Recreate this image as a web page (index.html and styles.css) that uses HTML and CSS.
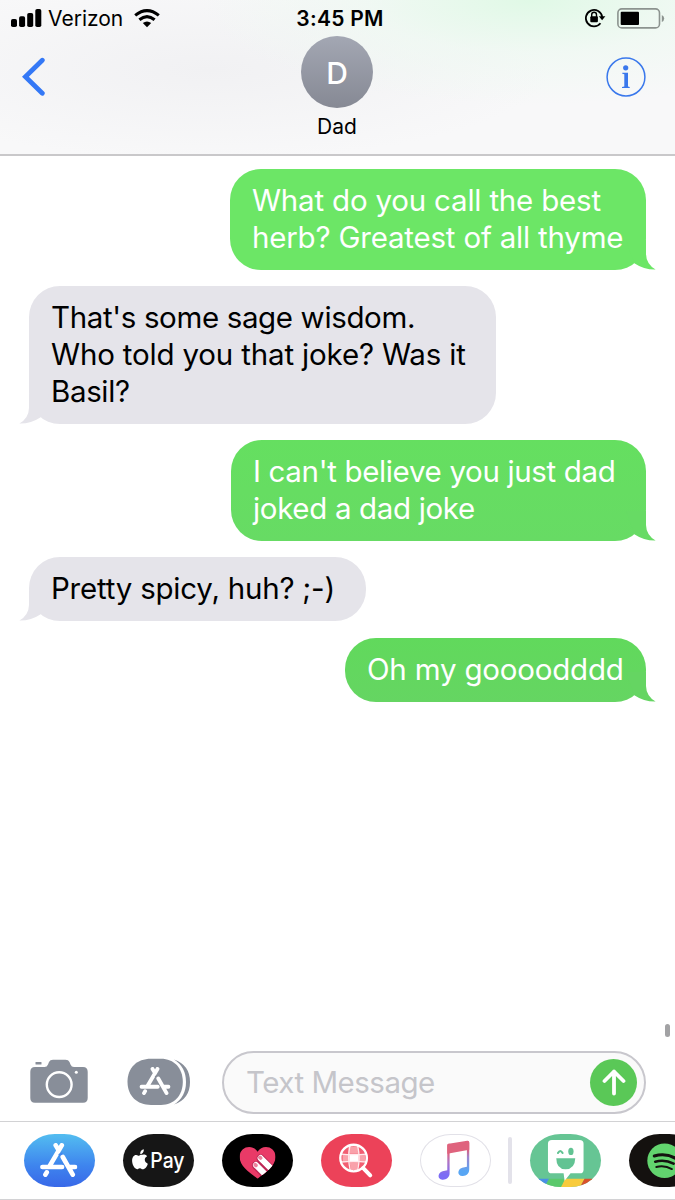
FILE: index.html
```html
<!DOCTYPE html>
<html lang="en">

<head>
    <meta charset="UTF-8">
    <meta name="viewport" content="width=device-width, initial-scale=1.0">
    <title>Messages</title>
    <link rel="stylesheet" href="styles.css">
</head>

<body>
    <!-- shared shapes -->
    <svg width="0" height="0" class="defs">
        <defs>
            <symbol id="tail" viewBox="0 0 30 30">
                <path d="M8.3 23.3Q18 29.8 29.6 29.6Q20.2 24 20 14V0H0Z" />
            </symbol>
            <symbol id="appstore" viewBox="0 0 112 102">
                <g fill="none" stroke="currentColor" stroke-width="14" stroke-linecap="round">
                    <path d="M7 72H66M20 88L16 95M47 7L56 22M65 7L28 70" />
                    <path class="cut" d="M60 31L94 92" stroke-width="12" stroke-linecap="butt" />
                    <path d="M68 42L98 95M88 72H105" />
                </g>
            </symbol>
        </defs>
    </svg>

    <div class="phone">
        <div class="header">
            <div class="status">
                <div class="carrier">
                    <svg class="signal" width="31" height="19" viewBox="0 0 31 19">
                        <rect x="0" y="10" width="6" height="8" rx="1.8" />
                        <rect x="8.1" y="7.3" width="6" height="10.7" rx="1.8" />
                        <rect x="16.2" y="4" width="6" height="14" rx="1.8" />
                        <rect x="24.3" y="0" width="6" height="18" rx="1.8" />
                    </svg>
                    <span class="network">Verizon</span>
                    <svg class="wifi" width="26" height="19" viewBox="0 0 26 19">
                        <g fill="none" stroke="#000" stroke-width="3.1">
                            <path d="M1.2 6.4Q13 -3.2 24.8 6.4" />
                            <path d="M5.4 10.8Q13 4.6 20.6 10.8" />
                        </g>
                        <path d="M8.8 14.1Q13 10.8 17.2 14.1L13 18.2Z" />
                    </svg>
                </div>
                <div class="time">3:45 PM</div>
                <div class="power">
                    <svg width="21" height="20" viewBox="0 0 21 20">
                        <path d="M15.5 15.3A8.2 8.2 0 1 1 17.2 9" fill="none" stroke="#000" stroke-width="1.8" />
                        <path d="M13.8 8.2H20.4L17.1 12.3Z" />
                        <rect x="5.3" y="8.2" width="7.6" height="6" rx="1" />
                        <path d="M6.7 9V6.7a2.4 2.4 0 0 1 4.8 0V9" fill="none" stroke="#000" stroke-width="1.4" />
                    </svg>
                    <svg width="49" height="21" viewBox="0 0 49 21">
                        <rect x="0.9" y="0.9" width="41.6" height="19" rx="4" fill="none" stroke="#8c938f" stroke-width="1.6" />
                        <rect x="3.7" y="3.7" width="18.3" height="13.4" rx="1" />
                        <path d="M44.8 7V14Q47.2 12.8 47.2 10.5T44.8 7Z" fill="#8c938f" />
                    </svg>
                </div>
            </div>
            <div class="nav">
                <svg class="back" width="24" height="40" viewBox="0 0 24 40">
                    <path d="M20.3 3.3L3.4 19.8L20.3 36.3" />
                </svg>
                <div class="contact">
                    <div class="avatar">D</div>
                    <div class="name">Dad</div>
                </div>
                <div class="info">
                    <svg width="40" height="40" viewBox="0 0 40 40">
                        <circle cx="20" cy="20" r="18.9" fill="none" stroke="#3a78ec" stroke-width="1.5" />
                        <circle cx="19.7" cy="10.8" r="2.6" />
                        <path d="M16.3 15.8H22V29.4L23.7 30V31H16V30L18.3 29.4V17.2L16.3 16.8Z" />
                    </svg>
                </div>
            </div>
        </div>

        <div class="messages">
            <div class="msg me first">
                What do you call the best<br>herb? Greatest of all thyme
                <svg class="tail"><use href="#tail" /></svg>
            </div>
            <div class="msg dad">
                <span class="tight">That's some sage wisdom.</span><br>Who told you that joke? Was it<br><span class="tight">Basil?</span>
                <svg class="tail"><use href="#tail" /></svg>
            </div>
            <div class="msg me second">
                I can't believe you just dad<br>joked a dad joke
                <svg class="tail"><use href="#tail" /></svg>
            </div>
            <div class="msg dad short">
                Pretty spicy, huh? ;-)
                <svg class="tail"><use href="#tail" /></svg>
            </div>
            <div class="msg me third">
                Oh my goooodddd
                <svg class="tail"><use href="#tail" /></svg>
            </div>
            <div class="scrollbar"></div>
        </div>

        <div class="compose">
            <svg class="camera" width="58" height="46" viewBox="0 0 58 46">
                <rect x="5.5" y="3" width="6" height="2.6" rx=".6" />
                <path d="M5 8H14.5Q17 8 18 5.5L19 3Q20 .7 23 .7H35.5Q38.5 .7 39.5 3L40.5 5.5Q41.5 8 44 8H53Q57.7 8 57.7 12.7V39Q57.7 43.7 53 43.7H5Q.3 43.7 .3 39V12.7Q.3 8 5 8Z" />
                <circle cx="29.2" cy="25.6" r="12.4" fill="none" stroke="#fff" stroke-width="2.4" />
                <circle cx="46.3" cy="13.3" r="1.5" fill="#fff" />
            </svg>
            <div class="drawer">
                <svg class="drawer-bg" width="64" height="48" viewBox="0 0 64 48">
                    <path d="M47 1.5Q63 7 63 24T47 46.5Q59 39 59 24T47 1.5Z" />
                    <path d="M24 .7H34C47 .7 55.8 10 55.8 23.8S47 47 34 47H24C10 47 .5 38 .5 23.8S10 .7 24 .7Z" />
                </svg>
                <svg class="drawer-a"><use href="#appstore" /></svg>
            </div>
            <div class="field">
                <span>Text Message</span>
                <div class="send">
                    <svg width="24" height="27" viewBox="0 0 24 27">
                        <path d="M12 24.5V2.5M2.5 12L12 2.5L21.5 12" />
                    </svg>
                </div>
            </div>
        </div>

        <div class="apps">
            <div class="app store">
                <svg class="store-a"><use href="#appstore" /></svg>
            </div>
            <div class="app pay">
                <svg viewBox="0 0 214 160">
                    <path fill="#fff" d="M62 66C56 57 46 60 42 63H39C28 57 18 66 19 82C20 97 30 108 37 107C42 104 46 103 51 107C60 109 69 97 70 89C57 83 58 70 68 65C66 62 64 61 62 60C54 57 47 62 44 63M46 58C44 49 51 43 57 42C58 51 52 58 46 58Z" transform="translate(10 7)scale(.92)" />
                    <text x="82" y="101" textLength="103" lengthAdjust="spacingAndGlyphs">Pay</text>
                </svg>
            </div>
            <div class="app touch">
                <svg viewBox="0 0 214 160">
                    <clipPath id="heart">
                        <path d="M107 53C94 30 53 35 53 69C53 96 83 116 107 134C131 116 161 96 161 69C161 35 120 30 107 53Z" />
                    </clipPath>
                    <g clip-path="url(#heart)">
                        <rect width="214" height="160" fill="#e93a67" />
                        <g fill="none" stroke-linecap="round">
                            <path d="M116 73L170 128M102 94L156 149" stroke="#be2856" stroke-width="25" />
                            <path d="M116 72L170 126M102 93L156 147" stroke="#fff" stroke-width="18" />
                            <path d="M114 70L116 72M100 92L102 94" stroke="#ec829d" stroke-width="11" />
                        </g>
                    </g>
                </svg>
            </div>
            <div class="app images">
                <svg viewBox="0 0 214 160">
                    <circle cx="98" cy="72" r="38" fill="#f25e72" />
                    <path fill="#f9a1aa" d="M83 37H112L114 59H83ZM65 61H84L86 82H65ZM113 61H133V82H114ZM85 84H113L108 108H91Z" />
                    <rect x="85" y="62" width="28" height="20" fill="#fff" />
                    <g fill="none" stroke="#ffe9ec" stroke-width="4">
                        <path d="M87 34Q79 72 88 110M110 34Q119 72 110 110M60 60Q98 64 136 60M60 84Q98 80 136 84" />
                    </g>
                    <circle cx="98" cy="72" r="40" fill="none" stroke="#fff" stroke-width="7" />
                    <path d="M127 102L148 124" stroke="#fff" stroke-width="12" stroke-linecap="round" />
                </svg>
            </div>
            <div class="app music">
                <svg viewBox="0 0 214 160">
                    <defs>
                        <linearGradient id="note" x1="0" y1="0" x2="0" y2="1">
                            <stop offset=".25" stop-color="#e2607e" />
                            <stop offset=".5" stop-color="#b075c3" />
                            <stop offset=".85" stop-color="#7d6cf5" />
                        </linearGradient>
                        <linearGradient id="note2" x1="0" y1="0" x2="0" y2="1">
                            <stop offset=".25" stop-color="#d9607f" />
                            <stop offset=".45" stop-color="#a083cc" />
                            <stop offset=".85" stop-color="#58a6f4" />
                        </linearGradient>
                    </defs>
                    <path fill="url(#note)" d="M82 34Q82 30 86 29L89 29V118C89 131 78 138 67 137C51 136 53 116 68 112L82 109Z" />
                    <path fill="url(#note2)" d="M141 22Q148 20 148 26V106C148 120 138 127 127 126C111 125 112 105 127 101L141 98Z" />
                    <path fill="#df637d" d="M82 34Q82 30 86 29L142 20Q148 19 148 25V47L82 59Z" />
                </svg>
            </div>
            <div class="divider"></div>
            <div class="app bitmoji">
                <svg viewBox="0 0 214 160">
                    <path fill="#4a8fe5" d="M0 134H58L44 160H0Z" />
                    <path fill="#5bc96c" d="M57 134H107L94 160H43Z" />
                    <path fill="#f8cb3c" d="M106 134H164L150 160H93Z" />
                    <path fill="#d9512c" d="M164 134H214V160H150Z" />
                    <path fill="#fff" d="M66 18H149Q161 18 161 29V107Q161 118 150 118H122L104 140L101 118H66Q54 118 54 107V29Q54 18 66 18Z" />
                    <path fill="#62c393" d="M79 73H136Q135 106 107 106T79 73Z" />
                    <ellipse cx="123" cy="52" rx="8" ry="11" fill="#62c393" />
                    <path d="M84 57Q91 44 98 57" fill="none" stroke="#62c393" stroke-width="6" stroke-linecap="round" />
                </svg>
            </div>
            <div class="app spotify">
                <svg viewBox="0 0 214 160">
                    <circle cx="107" cy="80" r="52" fill="#62d46e" />
                    <g fill="none" stroke="#14110f" stroke-linecap="round">
                        <path d="M76 66Q110 56 140 73" stroke-width="9" />
                        <path d="M79 83Q108 75 134 89" stroke-width="8" />
                        <path d="M82 99Q107 93 129 105" stroke-width="6" />
                    </g>
                </svg>
            </div>
        </div>
    </div>
</body>

</html>
```
FILE: styles.css
```css
* {
    box-sizing: border-box;
}

body {
    margin: 0;
    background: #fff;
    font-family: Inter, "Liberation Sans", sans-serif;
    color: #000;
}

svg {
    display: block;
    flex-shrink: 0;
}

.defs {
    position: absolute;
}

.phone {
    width: 675px;
    height: 1200px;
    display: flex;
    flex-direction: column;
    overflow: hidden;
}

/* header */
.header {
    height: 156px;
    border-bottom: 2px solid #c9c8ca;
    background: radial-gradient(ellipse 330px 105px at 530px 0, #e0f9e6, rgba(236, 249, 240, 0.6) 50%, rgba(248, 248, 249, 0)),
        radial-gradient(ellipse 340px 90px at 210px 70px, #f1f1f3, rgba(241, 241, 243, 0)),
        #f8f8f9;
}

.status {
    display: grid;
    grid-template-columns: 1fr auto 1fr;
    align-items: center;
    height: 36px;
    padding: 0 9px 0 11px;
}

.carrier,
.power {
    display: flex;
    align-items: center;
}

.power {
    justify-content: flex-end;
    gap: 11px;
}

.network {
    font-size: 21px;
    margin: 0 11px 0 6px;
}

.time {
    font-size: 21px;
    font-weight: 600;
    letter-spacing: 0.3px;
    padding-left: 3px;
}

.nav {
    display: grid;
    grid-template-columns: 1fr auto 1fr;
    padding: 0 29px 0 22px;
}

.back {
    margin-top: 21px;
    fill: none;
    stroke: #3478f6;
    stroke-width: 4.8;
    stroke-linecap: round;
}

.contact {
    display: flex;
    flex-direction: column;
    align-items: center;
    margin: 0 -3px 0 3px;
}

.avatar {
    width: 72px;
    height: 72px;
    border-radius: 50%;
    background: linear-gradient(#a3a7b3, #868994);
    color: #fff;
    font-size: 30px;
    font-weight: 500;
    line-height: 75px;
    text-align: center;
}

.name {
    font-size: 21px;
    line-height: 38px;
}

.info {
    justify-self: end;
    margin-top: 21px;
    fill: #3a78ec;
}

/* messages */
.messages {
    position: relative;
    display: flex;
    flex-direction: column;
    align-items: flex-start;
    gap: 16.4px;
    height: 886px;
    padding: 13px 29px 0;
}

.msg {
    position: relative;
    padding: 13.2px 22px 14.2px;
    border-radius: 31px;
    font-size: 29.5px;
    line-height: 36.7px;
    white-space: nowrap;
}

.me {
    align-self: flex-end;
    color: #fff;
    font-weight: 400;
    letter-spacing: -0.2px;
}

.first {
    width: 416px;
    background: #6ce666;
    fill: #6ce666;
}

.second {
    width: 415px;
    background: linear-gradient(#65df60, #67db64);
    fill: #67db64;
    letter-spacing: -0.34px;
}

.third {
    width: 301px;
    background: linear-gradient(#61d95c, #65d562);
    fill: #65d562;
}

.dad {
    width: 467px;
    background: #e5e4ea;
    fill: #e5e4ea;
    letter-spacing: -0.17px;
}

.tight {
    letter-spacing: -0.36px;
}

.short {
    width: 337px;
    letter-spacing: -0.22px;
}

.tail {
    position: absolute;
    right: -10px;
    bottom: 0;
    width: 30px;
    height: 30px;
}

.dad .tail {
    right: auto;
    left: -10px;
    transform: scaleX(-1);
}

.scrollbar {
    position: absolute;
    right: 5px;
    bottom: 5px;
    width: 5px;
    height: 13px;
    border-radius: 3px;
    background: #a2a2a4;
}

/* compose row */
.compose {
    display: flex;
    align-items: center;
    height: 79px;
    padding: 1px 29px 0 30px;
}

.camera {
    fill: #888e99;
}

.drawer {
    position: relative;
    margin: 0 31px 0 38.5px;
    color: #fff;
    fill: #888e99;
    --cut: #888e99;
}

.drawer-a {
    position: absolute;
    left: 12px;
    top: 9px;
    width: 32px;
    height: 28px;
}

.cut {
    stroke: var(--cut);
}

.field {
    flex: 1;
    display: flex;
    align-items: center;
    justify-content: space-between;
    height: 63px;
    padding: 0 7px 0 22.5px;
    border: 2px solid #c8c7cd;
    border-radius: 32px;
    background: #fafafa;
    color: #c5c5ca;
    font-size: 29.5px;
    letter-spacing: -0.5px;
}

.send {
    display: flex;
    align-items: center;
    justify-content: center;
    width: 47px;
    height: 47px;
    border-radius: 50%;
    background: #5ac857;
}

.send path {
    fill: none;
    stroke: #fff;
    stroke-width: 3.8;
    stroke-linecap: round;
    stroke-linejoin: round;
}

/* app strip */
.apps {
    display: flex;
    align-items: center;
    gap: 28px;
    height: 79px;
    padding: 0 0 0 23.5px;
    border-top: 1px solid #d2d2d4;
    border-bottom: 1px solid #d2d2d4;
}

.app {
    display: flex;
    align-items: center;
    justify-content: center;
    flex-shrink: 0;
    width: 71.2px;
    height: 53.4px;
    border-radius: 31px / 26.7px;
    overflow: hidden;
}

.app > svg {
    width: 100%;
    height: 100%;
}

.store {
    background: linear-gradient(#53bdf0, #3e84ee 60%, #3868e8);
    color: #fff;
    --cut: #4088ee;
}

.app > .store-a {
    width: 37.5px;
    height: 34px;
    margin-bottom: 1px;
}

.pay {
    background: #161616;
}

.pay text {
    fill: #fff;
    font-size: 65px;
    font-weight: 500;
}

.touch {
    background: #000;
}

.images {
    background: #ec4259;
}

.music {
    box-shadow: inset 0 0 0 1px #e2e1e8;
}

.divider {
    flex-shrink: 0;
    width: 3.5px;
    height: 47px;
    margin: 0 -10px 0 -11px;
    border-radius: 2px;
    background: #e3e2ea;
}

.bitmoji {
    background: #66c594;
}

.spotify {
    background: #14110f;
}
```
